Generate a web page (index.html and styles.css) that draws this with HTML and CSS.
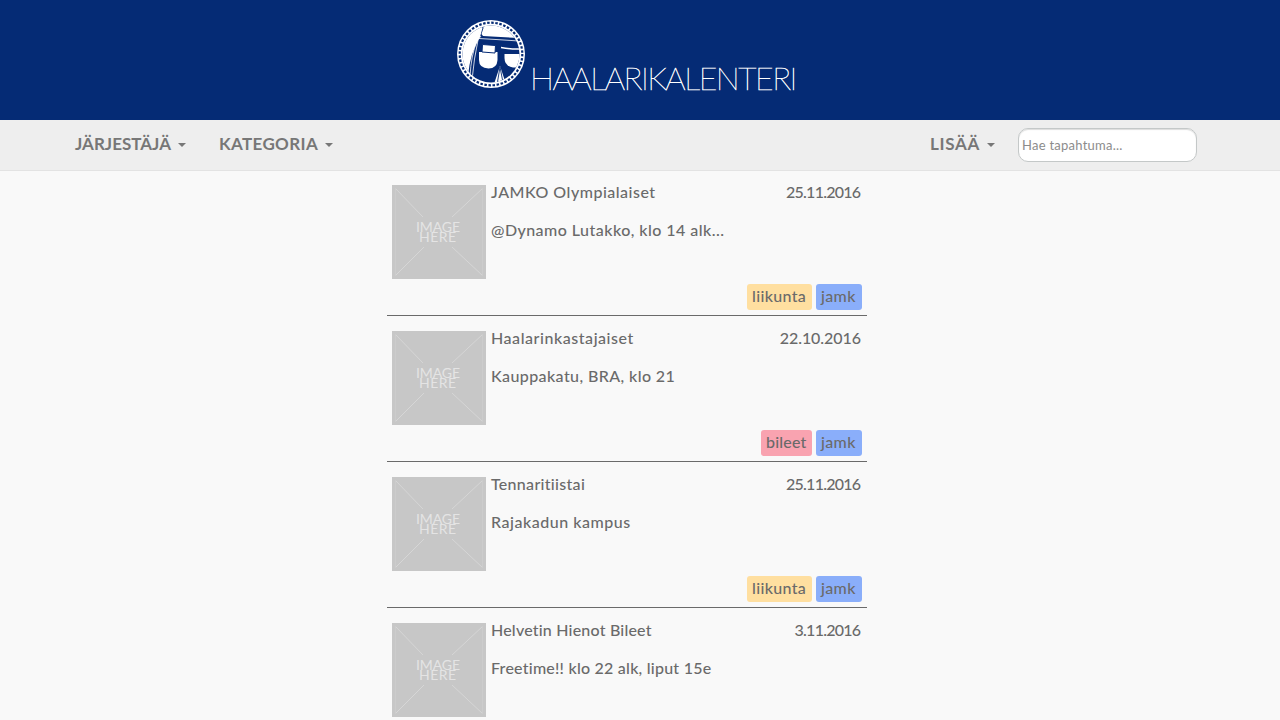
FILE: index.html
```html
<!DOCTYPE html>
<html lang="fi">
<head>
<meta charset="utf-8">
<title>Haalarikalenteri</title>
<link rel="stylesheet" href="styles.css">
</head>
<body>
<svg class="defs" width="0" height="0">
  <symbol id="placeholder" viewBox="0 0 94 94">
    <rect width="94" height="94" fill="#c7c7c7"/>
    <path d="M3 3L31 32M91 3L60 32M3 91L32 62M91 91L60 62" stroke="#d6d6d6" stroke-width="1" fill="none"/>
    <path d="M3.500 3V91M90.500 3V91" stroke="#cccccc" fill="none"/>
    <g class="ph-text"><text x="24" y="47" textLength="44">IMAGE</text><text x="27" y="57" textLength="37">HERE</text></g>
  </symbol>
</svg>
<header class="banner">
  <svg class="emblem" viewBox="0 0 68 68" width="68" height="68">
    <defs><clipPath id="disc"><circle cx="34" cy="34" r="28.500"/></clipPath></defs>
    <circle cx="34" cy="34" r="34" fill="#fff"/>
    <circle cx="34" cy="34" r="31.300" fill="none" stroke="#052b75" stroke-width="2.200" stroke-dasharray="2.500 1.597"/>
    <circle cx="34" cy="34" r="28.500" fill="#052b75"/>
    <g clip-path="url(#disc)">
      <path d="M4 4H24L25.500 8L23 17Q13 33 11 56L4 51Z" fill="#fff"/>
      <path d="M25 2H62V18Q43 17 26 16L24.500 14L26.500 8Z" fill="#fff"/>
      <path d="M22 18.500Q40 19.500 62 21M21 20Q17 38 15 60M24 16L20 21Q14 35 13 57" fill="none" stroke="#fff" stroke-width=".8"/>
      <path d="M22 32H40.500V40Q40 48.500 31.500 48.500Q22 48 22 40Z" fill="#fff"/>
      <path d="M25.500 24.500L38.500 25.500L38 33L25 32Z" fill="#fff" stroke="#052b75" stroke-width="1"/>
      <path d="M44 27.500Q54 29.500 64 29" fill="none" stroke="#fff" stroke-width="1.500"/>
      <path d="M47.500 34H65V47.500H56Q47.500 46 47.500 38Z" fill="#fff"/>
      <path d="M43 46L37 64H49Z" fill="#fff"/>
      <path d="M43 47L40 65M43 47L46.500 65" stroke="#052b75" stroke-width=".9"/>
    </g>
  </svg>
  <h1 class="wordmark">HAALARIKALENTERI</h1>
</header>
<nav class="navbar">
  <a class="nav-item organizer"><span>JÄRJESTÄJÄ</span><i class="caret"></i></a>
  <a class="nav-item category"><span>KATEGORIA</span><i class="caret"></i></a>
  <a class="nav-item more"><span>LISÄÄ</span><i class="caret"></i></a>
  <input class="search" type="text" placeholder="Hae tapahtuma...">
</nav>
<main class="events">
  <article class="event">
    <svg class="thumb"><use href="#placeholder"/></svg>
    <div class="body"><div class="head"><span class="t1">JAMKO Olympialaiset</span><time>25.11.2016</time></div><p class="d1">@Dynamo Lutakko, klo 14 alk...</p></div>
    <div class="tags"><span class="tag sport">liikunta</span><span class="tag school">jamk</span></div>
  </article>
  <article class="event">
    <svg class="thumb"><use href="#placeholder"/></svg>
    <div class="body"><div class="head"><span class="t2">Haalarinkastajaiset</span><time class="wide">22.10.2016</time></div><p class="d2">Kauppakatu, BRA, klo 21</p></div>
    <div class="tags"><span class="tag party">bileet</span><span class="tag school">jamk</span></div>
  </article>
  <article class="event">
    <svg class="thumb"><use href="#placeholder"/></svg>
    <div class="body"><div class="head"><span class="t3">Tennaritiistai</span><time>25.11.2016</time></div><p class="d3">Rajakadun kampus</p></div>
    <div class="tags"><span class="tag sport">liikunta</span><span class="tag school">jamk</span></div>
  </article>
  <article class="event">
    <svg class="thumb"><use href="#placeholder"/></svg>
    <div class="body"><div class="head"><span class="t4">Helvetin Hienot Bileet</span><time>3.11.2016</time></div><p class="d4">Freetime!! klo 22 alk, liput 15e</p></div>
  </article>
</main>
</body>
</html>
```
FILE: styles.css
```css
* { box-sizing: border-box; }
html, body { height: 100%; overflow: hidden; }
body { margin: 0; background: #f9f9f9; color: #6a6a6a; font: 500 16px/20px Lato, "Liberation Sans", sans-serif; }
.defs { display: block; }
.banner { height: 120px; background: #052b75; display: flex; align-items: flex-start; padding: 20px 0 0 457px; color: #fff; }
.emblem { flex: none; }
.wordmark { margin: 37px 0 0 5px; font-size: 32px; line-height: 42px; font-weight: 100; letter-spacing: -1.5px; -webkit-text-stroke: .5px #fff; }
.navbar { height: 51px; background: #eee; border-bottom: 1px solid #e3e3e3; display: flex; align-items: flex-start; padding: 8px 83px 0 75px; }
.nav-item { display: flex; align-items: center; font-weight: 700; font-size: 17px; line-height: 32px; color: #777; }
.caret { border: 4px solid transparent; border-top-color: #777; border-bottom: 0; margin: 2px 0 0 7px; }
.organizer { width: 144px; }
.category { letter-spacing: .36px; }
.more { margin-left: auto; width: 88px; letter-spacing: .7px; }
.search { width: 179px; height: 34px; border: 1px solid #c4c8c8; border-radius: 10px; background: #fff; padding: 0 3px; font: 13px Lato, sans-serif; letter-spacing: .25px; box-shadow: inset 0 1px 1px #ddd; }
.search::placeholder { color: #8c8c8c; opacity: 1; }
.events { width: 480px; margin-left: 387px; }
.event { height: 146px; padding: 15px 5px 0; border-bottom: 1px solid #6a6a6a; display: grid; grid-template-columns: 94px 1fr; grid-template-rows: 94px 26px; column-gap: 5px; row-gap: 5px; }
.event:first-child { height: 145px; padding-top: 14px; }
.thumb { width: 94px; height: 94px; display: block; }
.ph-text { fill: #e4e4e4; font: 400 14px Lato, sans-serif; }
.head { display: flex; justify-content: space-between; line-height: 14px; padding-right: 1px; }
.body p { margin: 24px 0 0; line-height: 14px; white-space: nowrap; }
time { letter-spacing: -.74px; margin-right: .6px; }
.wide { letter-spacing: -.05px; margin-right: 0; }
.t1 { letter-spacing: .5px; }
.t2 { letter-spacing: .55px; }
.t3 { letter-spacing: .3px; }
.t4 { letter-spacing: .2px; }
.d1 { letter-spacing: .46px; }
.d2 { letter-spacing: .4px; }
.d3 { letter-spacing: .53px; }
.d4 { letter-spacing: .23px; }
.tags { grid-column: 1 / 3; display: flex; justify-content: flex-end; gap: 4px; }
.tag { height: 26px; line-height: 24px; border-radius: 3px; padding-left: 5px; letter-spacing: .35px; }
.sport { width: 65px; background: #ffdfa0; }
.school { width: 46px; background: #8aaefa; }
.party { width: 51px; background: #f9a3b0; letter-spacing: .2px; }
```
